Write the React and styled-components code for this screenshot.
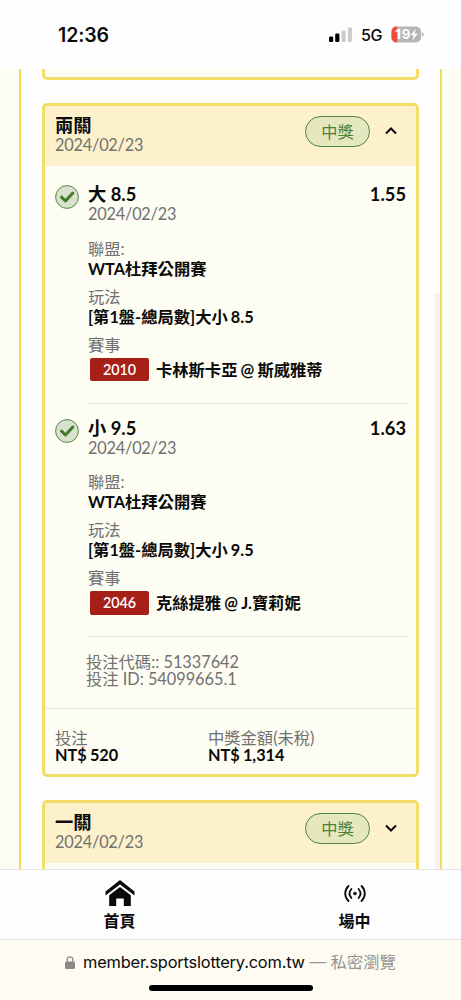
import React from 'react'
import styled, { createGlobalStyle } from 'styled-components'

const GlobalStyle = createGlobalStyle`
  * {
    box-sizing: border-box;
  }

  body {
    margin: 0;
    background: #fefefe;
    color: #0b0b0b;
    font-family: Lato, 'Noto Sans CJK TC', sans-serif;
  }
`

const Screen = styled.div`
  display: flex;
  flex-direction: column;
  height: 1000px;
  overflow: hidden;
`

const StatusBar = styled.header`
  display: flex;
  align-items: center;
  flex: none;
  height: 69px;
  padding: 0 37px 0 58px;
  background: #fefefe;
  font-family: Inter, sans-serif;
`

const Clock = styled.span`
  flex: 1;
  font-size: 19.5px;
  font-weight: 600;
  letter-spacing: -0.1px;
`

const Signal = styled.svg`
  width: 23px;
  height: 15px;
  margin-right: 9px;
`

const Network = styled.span`
  width: 22px;
  margin-right: 8px;
  font-size: 16px;
  font-weight: 500;
  letter-spacing: -0.3px;
`

const Battery = styled.svg`
  width: 33px;
  height: 17px;
  margin-top: -1px;
`

const Page = styled.main`
  display: flex;
  flex: none;
  height: 800px;
  padding: 0 19px;
  background: #fdfdf3;
  overflow: hidden;
`

const Frame = styled.div`
  position: relative;
  display: flex;
  flex-direction: column;
  width: 423px;
  padding: 0 21px;
  gap: 23px;
  border-left: 2px solid #f3da60;
  border-right: 2px solid #f3da60;
  background: #fefefe;
`

const Scrollbar = styled.div`
  position: absolute;
  top: 224px;
  right: 0;
  bottom: 0;
  width: 5px;
  background: #f1f1f1;
`

const Card = styled.section`
  flex: none;
  width: 377px;
  height: ${props => props.$height}px;
  border: 3px solid #f4dc68;
  border-top-width: ${props => (props.$cut ? 0 : '3px')};
  border-radius: ${props => (props.$cut ? '0 0 5px 5px' : '5px')};
  background: #fdfdf3;
  overflow: hidden;
`

const CardHeader = styled.div`
  display: flex;
  align-items: flex-start;
  height: 59.5px;
  padding: 8.5px 19px 0 10px;
  background: #fcf1cb;
`

const Heading = styled.div`
  flex: 1;
`

const Title = styled.h3`
  margin: 0;
  height: 20px;
  font-size: 18.3px;
  font-weight: 700;
  line-height: 20px;
`

const DateText = styled.p`
  margin: 0;
  height: 18px;
  color: #717171;
  font-size: 16.3px;
  letter-spacing: -0.2px;
  line-height: 19px;
`

const Status = styled.span`
  display: flex;
  justify-content: center;
  width: 65px;
  height: 31px;
  margin-top: 1.5px;
  border: 1px solid #52833f;
  border-radius: 16px;
  background: #e5e7be;
  color: #4c8038;
  font-size: 16.3px;
  line-height: 30px;
`

const Chevron = styled.svg`
  width: 12px;
  height: 8px;
  margin: 12px 0 0 15px;
`

const Legs = styled.div`
  padding-top: 4.5px;
`

const Leg = styled.article`
  display: flex;
  height: 233.5px;
  padding: 0 8px 0 10px;
`

const CheckMark = styled.svg`
  flex: none;
  width: 24px;
  height: 24px;
  margin: 15px 9px 0 0;
`

const LegBody = styled.div`
  flex: 1;
  padding-top: 14px;
  border-bottom: 1.5px solid #e5e5dc;
`

const LegTop = styled.div`
  display: flex;
  justify-content: space-between;
  padding-right: 2px;
`

const Fields = styled.div`
  margin-top: 16.5px;
`

const Field = styled.div`
  height: 48px;
`

const Label = styled.p`
  margin: 0;
  height: ${props => props.$height || 20}px;
  color: #717171;
  font-size: 16.3px;
  line-height: 20px;
`

const Value = styled.p`
  margin: 0;
  font-size: 16.3px;
  font-weight: 700;
  line-height: 20px;
  white-space: nowrap;
  word-spacing: -0.8px;
`

const Match = styled.div`
  display: flex;
  align-items: center;
  height: 24px;
  margin: 3px 0 0 2px;
  gap: 7px;
`

const MatchCode = styled.span`
  width: 59px;
  height: 23.5px;
  border-radius: 2px;
  background: #a62018;
  color: #fff;
  font-size: 14.3px;
  font-weight: 600;
  line-height: 24px;
  text-align: center;
`

const Codes = styled.div`
  height: 71.5px;
  padding: 14.5px 0 0 41px;
  border-bottom: 1.5px solid #e5e5dc;
`

const Totals = styled.div`
  display: grid;
  grid-template-columns: 153px 1fr;
  padding: 19px 0 0 10px;
`

const TabBar = styled.nav`
  display: grid;
  grid-template-columns: 239px 1fr;
  flex: none;
  height: 71px;
  border-top: 1px solid #e3e3e0;
  border-bottom: 1px solid #e3e3e0;
  background: #fefefe;
`

const Tab = styled.div`
  display: flex;
  flex-direction: column;
  align-items: center;
  padding-top: 10px;
  padding-left: ${props => props.$shift || 0}px;
  font-size: 16px;
  font-weight: 700;

  svg {
    width: 30px;
    height: 28px;
  }

  span {
    margin-top: 2px;
    line-height: 22px;
  }
`

const BrowserBar = styled.footer`
  display: flex;
  flex-direction: column;
  align-items: center;
  flex: none;
  height: 60px;
  padding-top: 10px;
  background: #fdfbf2;
`

const Address = styled.div`
  display: flex;
  align-items: center;
  height: 24px;
  font-family: Inter, 'Noto Sans CJK TC', sans-serif;
  font-size: 16.4px;
  line-height: 24px;
  white-space: pre;

  svg {
    width: 10px;
    height: 13px;
    margin-right: 8px;
  }
`

const Host = styled.span`
  letter-spacing: -0.19px;
`

const Mode = styled.span`
  color: #96958f;
`

const HomeIndicator = styled.div`
  width: 164px;
  height: 6px;
  margin-top: 11px;
  border-radius: 3px;
  background: #000;
`

const legs = [
  {
    pick: '大 8.5',
    odds: '1.55',
    play: '[第1盤-總局數]大小 8.5',
    code: '2010',
    match: '卡林斯卡亞 @ 斯威雅蒂'
  },
  {
    pick: '小 9.5',
    odds: '1.63',
    play: '[第1盤-總局數]大小 9.5',
    code: '2046',
    match: '克絲提雅 @ J.寶莉妮'
  }
]

const TicketHeader = ({ title, open }) => (
  <CardHeader>
    <Heading>
      <Title>{title}</Title>
      <DateText>2024/02/23</DateText>
    </Heading>
    <Status>中獎</Status>
    <Chevron viewBox='0 0 12 8' fill='none' stroke='#0b0b0b' strokeWidth='2'>
      <path d={open ? 'M1 6.5 6 1.5l5 5' : 'M1 1.5l5 5 5-5'} />
    </Chevron>
  </CardHeader>
)

const TicketLeg = ({ leg }) => (
  <Leg>
    <CheckMark viewBox='0 0 24 24' fill='none'>
      <circle cx='12' cy='12' r='11.4' fill='#d8e2ce' stroke='#568645' />
      <path
        d='M6.5 12.2l4 3.8 7.3-8'
        stroke='#427a2b'
        strokeWidth='3'
        strokeLinecap='round'
        strokeLinejoin='round'
      />
    </CheckMark>
    <LegBody>
      <LegTop>
        <Title>{leg.pick}</Title>
        <Title>{leg.odds}</Title>
      </LegTop>
      <DateText>2024/02/23</DateText>
      <Fields>
        <Field>
          <Label>聯盟:</Label>
          <Value>WTA杜拜公開賽</Value>
        </Field>
        <Field>
          <Label>玩法</Label>
          <Value>{leg.play}</Value>
        </Field>
        <Field>
          <Label>賽事</Label>
          <Match>
            <MatchCode>{leg.code}</MatchCode>
            <Value>{leg.match}</Value>
          </Match>
        </Field>
      </Fields>
    </LegBody>
  </Leg>
)

const App = () => (
  <>
    <GlobalStyle />
    <Screen>
      <StatusBar>
        <Clock>12:36</Clock>
        <Signal viewBox='0 0 23 15'>
          <rect x='0' y='9.5' width='4.2' height='5.5' rx='1.2' fill='#000' />
          <rect x='6.2' y='6.5' width='4.2' height='8.5' rx='1.2' fill='#000' />
          <rect x='12.5' y='3.5' width='4.2' height='11.5' rx='1.2' fill='#ccc' />
          <rect x='18.8' y='0.5' width='4.2' height='14.5' rx='1.2' fill='#ccc' />
        </Signal>
        <Network>5G</Network>
        <Battery viewBox='0 0 33 17'>
          <rect x='0.5' y='0.5' width='29.5' height='16' rx='5' fill='#b5b5b5' />
          <path d='M6 .5H5.5a5 5 0 0 0-5 5v6a5 5 0 0 0 5 5H6z' fill='#ee4b3c' />
          <path d='M31 6c2.2.8 2.2 4.2 0 5z' fill='#b5b5b5' />
          <text
            x='4.3'
            y='13.3'
            fill='#fff'
            fontFamily='Inter, sans-serif'
            fontSize='13.3'
            fontWeight='700'
            textLength='15'
          >
            19
          </text>
          <path d='M24.8 2.8l-5.3 6.4h3.2l-1.3 5 5.6-6.5h-3.3z' fill='#fff' />
        </Battery>
      </StatusBar>

      <Page>
        <Frame>
          <Card $height={11} $cut />
          <Card $height={674}>
            <TicketHeader title='兩關' open />
            <Legs>
              {legs.map(leg => (
                <TicketLeg key={leg.code} leg={leg} />
              ))}
            </Legs>
            <Codes>
              <Label $height={17.5}>投注代碼:: 51337642</Label>
              <Label $height={17.5}>投注 ID: 54099665.1</Label>
            </Codes>
            <Totals>
              <div>
                <Label $height={17.5}>投注</Label>
                <Value>NT$ 520</Value>
              </div>
              <div>
                <Label $height={17.5}>中獎金額(未稅)</Label>
                <Value>NT$ 1,314</Value>
              </div>
            </Totals>
          </Card>
          <Card $height={120}>
            <TicketHeader title='一關' />
          </Card>
          <Scrollbar />
        </Frame>
      </Page>

      <TabBar>
        <Tab>
          <svg viewBox='0 0 30 28' fill='#0b0b0b'>
            <path d='M15 0L.5 11.5v4L15 4.5l14.5 11v-4z' />
            <path d='M15 7L4.2 15.2V26h7v-7.5h7.6V26h7V15.2z' />
          </svg>
          <span>首頁</span>
        </Tab>
        <Tab $shift={9}>
          <svg
            viewBox='0 0 30 28'
            fill='none'
            stroke='#0b0b0b'
            strokeWidth='1.8'
            strokeLinecap='round'
          >
            <circle cx='15' cy='13.5' r='1.8' fill='#0b0b0b' stroke='none' />
            <path d='M8.5 6c-4.4 4.4-4.4 10.6 0 15M21.5 6c4.4 4.4 4.4 10.6 0 15' />
            <path d='M11.4 9c-2.4 2.8-2.4 6.2 0 9M18.6 9c2.4 2.8 2.4 6.2 0 9' />
          </svg>
          <span>場中</span>
        </Tab>
      </TabBar>

      <BrowserBar>
        <Address>
          <svg viewBox='0 0 10 13' fill='none'>
            <rect x='0' y='5.5' width='10' height='7.5' rx='1.5' fill='#8b8a86' />
            <path d='M2.2 6V3.6a2.8 2.8 0 0 1 5.6 0V6' stroke='#8b8a86' strokeWidth='1.3' />
          </svg>
          <Host>member.sportslottery.com.tw</Host>
          <Mode> — 私密瀏覽</Mode>
        </Address>
        <HomeIndicator />
      </BrowserBar>
    </Screen>
  </>
)

export default App
